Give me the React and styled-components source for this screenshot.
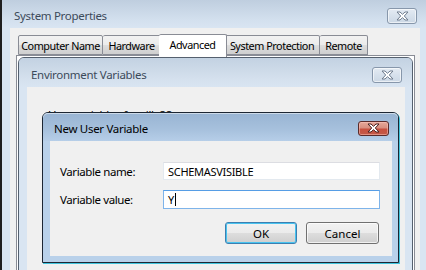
import React from 'react';
import styled, { createGlobalStyle } from 'styled-components';

const GlobalStyle = createGlobalStyle`
	html, body {
		margin: 0;
		padding: 0;
		background: #1f1f1f;
		overflow: hidden;
	}
	body {
		font-family: 'Noto Sans', 'Open Sans', sans-serif;
		font-size: 12px;
		color: #1e1e1e;
	}
`;

const tabs = [
	{ label: 'Computer Name', w: 85 },
	{ label: 'Hardware', w: 58 },
	{ label: 'Advanced', w: 68, active: true },
	{ label: 'System Protection', w: 95 },
	{ label: 'Remote', w: 48 },
];

const CloseGlyph = ({ active }) => (
	<svg width="13" height="10" viewBox="0 0 13 10">
		<path
			d="M1 1 H4 L6.5 3.3 L9 1 H12 L8.3 5 L12 9 H9 L6.5 6.7 L4 9 H1 L4.7 5 Z"
			fill="#fff"
			stroke={active ? '#4a2020' : '#6f7d8f'}
			strokeWidth="1"
			strokeLinejoin="round"
		/>
	</svg>
);

const App = () => {
	return (
		<>
			<GlobalStyle />
			<Desktop>
				<OuterWindow>
					<TitleBar>
						<Title>System Properties</Title>
						<CloseButton>
							<CloseGlyph />
						</CloseButton>
					</TitleBar>
					<OuterClient>
						<TabStrip>
							{tabs.map((tab) => (
								<Tab key={tab.label} $w={tab.w} $active={tab.active}>
									{tab.label}
								</Tab>
							))}
						</TabStrip>
						<TabPanel />
					</OuterClient>
				</OuterWindow>

				<EnvWindow>
					<TitleBar $inner>
						<Title>Environment Variables</Title>
						<CloseButton>
							<CloseGlyph />
						</CloseButton>
					</TitleBar>
					<EnvClient>
						<GroupLabel>User variables for silly88</GroupLabel>
					</EnvClient>
				</EnvWindow>

				<Dialog>
					<DialogTitleBar>
						<Title>New User Variable</Title>
						<CloseButton $active>
							<CloseGlyph active />
						</CloseButton>
					</DialogTitleBar>
					<DialogClient>
						<Form>
							<Label>Variable name:</Label>
							<TextBox>SCHEMASVISIBLE</TextBox>
							<Label>Variable value:</Label>
							<TextBox $focused>
								Y<Caret />
							</TextBox>
						</Form>
						<ButtonRow>
							<PushButton $default>OK</PushButton>
							<PushButton>Cancel</PushButton>
						</ButtonRow>
					</DialogClient>
				</Dialog>
			</Desktop>
		</>
	);
};

const Desktop = styled.div`
	position: relative;
	width: 426px;
	height: 270px;
	overflow: hidden;
	background: #1f1f1f;
`;

const OuterWindow = styled.div`
	position: absolute;
	left: 2px;
	top: 0;
	width: 426px;
	height: 300px;
	display: flex;
	flex-direction: column;
	background: linear-gradient(#bfcedf 0px, #d3e0ee 20px, #d9e5f2 28px, #d9e5f2 100%);
`;

const TitleBar = styled.div`
	height: ${(p) => (p.$inner ? '29px' : '28px')};
	flex: none;
	display: flex;
	align-items: center;
	justify-content: space-between;
	padding: 0 ${(p) => (p.$inner ? '10px' : '11px')} 0 12px;
	box-sizing: border-box;
	background: ${(p) =>
		p.$inner ? 'linear-gradient(#c3d2e2, #d4e0ed 70%, #d9e5f2)' : 'transparent'};
	border-radius: 5px 5px 0 0;
`;

const Title = styled.div`
	font-size: 11.5px;
	color: #3c4a5a;
	letter-spacing: -0.3px;
	white-space: nowrap;
	padding-top: 3px;
`;

const CloseButton = styled.div`
	width: ${(p) => (p.$active ? '31px' : '30px')};
	height: ${(p) => (p.$active ? '15px' : '16px')};
	box-sizing: border-box;
	margin-top: ${(p) => (p.$active ? '2px' : '4px')};
	border-radius: 3px;
	display: flex;
	align-items: center;
	justify-content: center;
	border: 1px solid ${(p) => (p.$active ? '#5a2b2b' : '#8797ab')};
	background: ${(p) =>
		p.$active
			? 'linear-gradient(#e6a89a 0%, #d88f80 45%, #c8503f 55%, #c25a48 100%)'
			: 'linear-gradient(#e4ebf3 0%, #d7e1ec 50%, #ccd8e5 100%)'};
	box-shadow: inset 0 0 0 1px ${(p) => (p.$active ? 'rgba(255,200,190,0.5)' : 'rgba(255,255,255,0.6)')};
`;

const OuterClient = styled.div`
	flex: 1;
	margin: 0 8px;
	background: #f0f0f0;
	padding: 6px 0 0 6px;
	display: flex;
	flex-direction: column;
`;

const TabStrip = styled.div`
	display: flex;
	align-items: flex-end;
	height: 23px;
	padding-left: 2px;
	margin-bottom: -2px;
	position: relative;
	z-index: 1;
`;

const Tab = styled.div`
	width: ${(p) => p.$w}px;
	height: ${(p) => (p.$active ? '23px' : '20px')};
	margin: ${(p) => (p.$active ? '0 -2px 0 -2px' : '0 0 2px 0')};
	box-sizing: border-box;
	display: flex;
	align-items: center;
	justify-content: center;
	white-space: nowrap;
	font-size: 10.8px;
	letter-spacing: -0.45px;
	color: #000;
	border: 1px solid #898c95;
	border-bottom: ${(p) => (p.$active ? 'none' : '1px solid #898c95')};
	border-radius: 2px 2px 0 0;
	padding-bottom: ${(p) => (p.$active ? '3px' : '0')};
	background: ${(p) =>
		p.$active ? '#fff' : 'linear-gradient(#f2f2f2 0%, #ebebeb 50%, #dddddd 51%, #cfcfcf 100%)'};
	position: relative;
	z-index: ${(p) => (p.$active ? 2 : 1)};
	& + & {
		border-left: ${(p) => (p.$active ? '1px solid #898c95' : 'none')};
	}
`;

const TabPanel = styled.div`
	flex: 1;
	width: 397px;
	border: 1px solid #898c95;
	background: #fff;
`;

const EnvWindow = styled.div`
	position: absolute;
	left: 18px;
	top: 57px;
	width: 395px;
	height: 240px;
	box-sizing: border-box;
	border: 1px solid #55606e;
	border-radius: 6px 6px 0 0;
	background: #d9e5f2;
	display: flex;
	flex-direction: column;
`;

const EnvClient = styled.div`
	flex: 1;
	margin: 0 7px 0 8px;
	background: #f0f0f0;
	padding: 20px 0 0 21px;
`;

const GroupLabel = styled.div`
	font-size: 11.5px;
	letter-spacing: -0.3px;
	color: #000;
`;

const Dialog = styled.div`
	position: absolute;
	left: 42px;
	top: 112px;
	width: 357px;
	height: 151px;
	box-sizing: border-box;
	border: 1px solid #1c2633;
	border-radius: 6px 6px 0 0;
	background: #b9d1ea;
	display: flex;
	flex-direction: column;
	box-shadow: 1px 1px 0 #40c4dc;
`;

const DialogTitleBar = styled.div`
	height: 28px;
	flex: none;
	display: flex;
	align-items: center;
	justify-content: space-between;
	padding: 0 9px 0 11px;
	box-sizing: border-box;
	border-radius: 5px 5px 0 0;
	background: linear-gradient(#98b4d3 0%, #a7c1dd 60%, #b6cee8 100%);
	box-shadow: inset 0 1px 0 rgba(255, 255, 255, 0.5);

	${Title} {
		color: #000;
	}
`;

const DialogClient = styled.div`
	flex: 1;
	margin: 0 6px 6px 7px;
	background: #f0f0f0;
	padding: 21px 12px 0 10px;
	display: flex;
	flex-direction: column;
`;

const Form = styled.div`
	display: grid;
	grid-template-columns: 103px 217px;
	grid-auto-rows: 18px;
	row-gap: 10px;
	align-items: center;
`;

const Label = styled.div`
	font-size: 11.5px;
	letter-spacing: -0.4px;
	color: #000;
`;

const TextBox = styled.div`
	height: ${(p) => (p.$focused ? '19px' : '18px')};
	box-sizing: border-box;
	background: #fff;
	display: flex;
	align-items: center;
	padding-left: 4px;
	font-size: 11px;
	letter-spacing: -0.3px;
	color: #000;
	border: 1px solid ${(p) => (p.$focused ? '#7eb4ea' : '#e3e9ef')};
	border-top-color: ${(p) => (p.$focused ? '#569de5' : '#dcdde2')};
`;

const Caret = styled.span`
	display: inline-block;
	width: 1px;
	height: 13px;
	background: #000;
	margin-left: 1px;
`;

const ButtonRow = styled.div`
	display: flex;
	justify-content: flex-end;
	gap: 9px;
	margin-top: 14px;
	padding-right: 1px;
`;

const PushButton = styled.div`
	width: ${(p) => (p.$default ? '72px' : '73px')};
	height: 22px;
	box-sizing: border-box;
	border-radius: 3px;
	display: flex;
	align-items: center;
	justify-content: center;
	font-size: 11.5px;
	color: #000;
	border: 1px solid ${(p) => (p.$default ? '#3c7fb1' : '#707070')};
	background: linear-gradient(#f2f2f2 0%, #ebebeb 50%, #dddddd 51%, #cfcfcf 100%);
	box-shadow: inset 0 0 0 1px ${(p) => (p.$default ? '#48c3ef' : 'rgba(255,255,255,0.7)')};
`;

export default App;
